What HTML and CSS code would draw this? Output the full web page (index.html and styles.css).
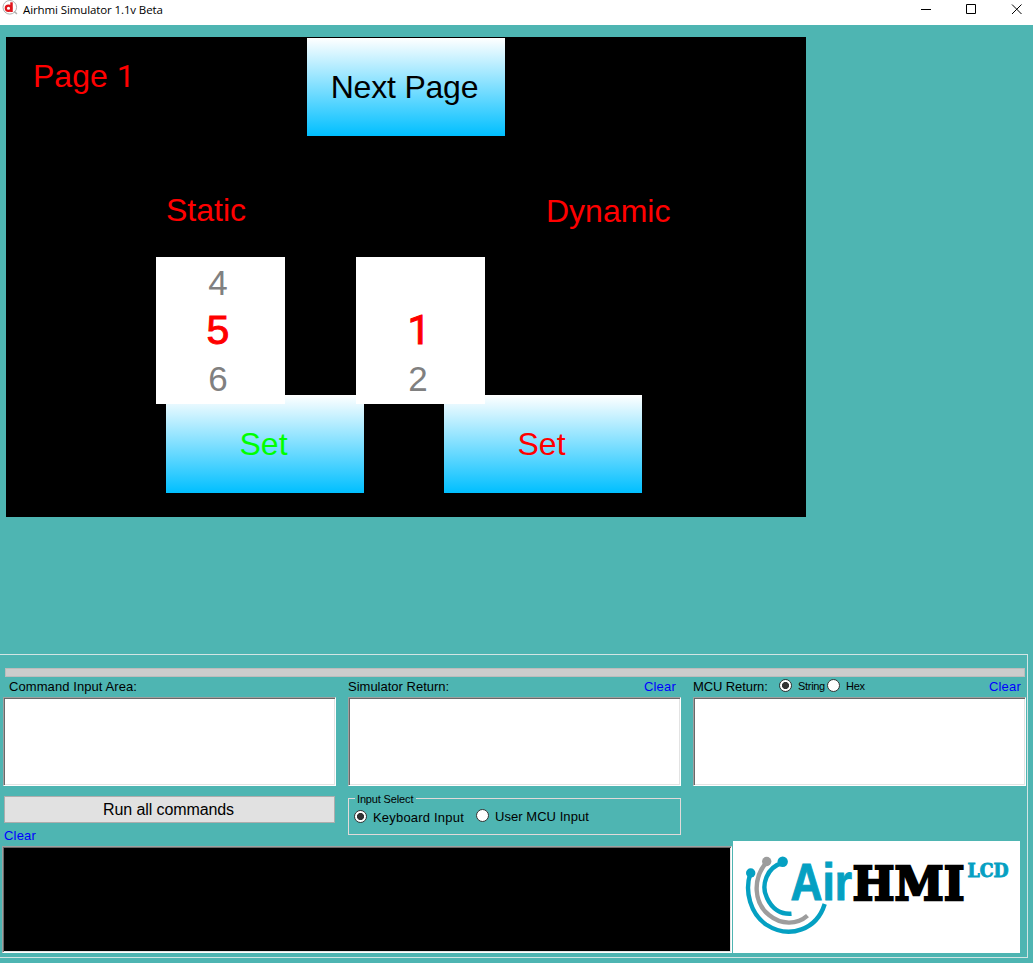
FILE: index.html
```html
<!DOCTYPE html>
<html lang="en">
<head>
<meta charset="utf-8">
<title>Airhmi Simulator 1.1v Beta</title>
<link rel="stylesheet" href="styles.css">
</head>
<body>
<header class="titlebar">
  <svg class="app-icon" width="16" height="16" viewBox="0 0 16 16">
    <circle cx="7.800" cy="7.300" r="6.800" fill="#fff" stroke="#b0b0b0"/>
    <path d="M12 11.500l3 2.300" stroke="#b0b0b0" stroke-width="1.500"/>
    <ellipse cx="6.500" cy="8.300" rx="2.700" ry="2.600" fill="none" stroke="#e0151b" stroke-width="2.200"/>
    <path d="M9.500 2.300v9.700" stroke="#e0151b" stroke-width="2.500"/>
  </svg>
  <span class="title">Airhmi Simulator 1.1v Beta</span>
  <svg class="controls" width="112" height="24" viewBox="0 0 112 24" fill="none" stroke="#000">
    <path d="M0 9.500h10M45.500 4.500h9v9h-9z"/>
    <path d="M91 4.500l9.500 9.500M100.500 4.500l-9.500 9.500"/>
  </svg>
</header>
<main class="stage">
  <div class="screen">
    <span class="label page-label">Page <span class="digit">1</span></span>
    <div class="button next">Next Page</div>
    <span class="label static-label">Static</span>
    <span class="label dynamic-label">Dynamic</span>
    <div class="button set-static">Set</div>
    <div class="button set-dynamic">Set</div>
    <div class="picker picker-static"><span>4</span><b>5</b><span class="after">6</span></div>
    <div class="picker picker-dynamic"><span></span><b class="digit">1</b><span class="after">2</span></div>
  </div>
</main>
<section class="console">
  <div class="progress"></div>
  <div class="columns">
    <div class="column">
      <div class="heading first"><span>Command Input Area:</span></div>
      <div class="textbox"></div>
    </div>
    <div class="column">
      <div class="heading"><span>Simulator Return:</span><span class="link">Clear</span></div>
      <div class="textbox"></div>
    </div>
    <div class="column">
      <div class="heading"><span class="mcu">MCU Return:</span>
        <i class="radio on string-radio"></i><span class="small string">String</span>
        <i class="radio hex-radio"></i><span class="small hex">Hex</span>
        <span class="link">Clear</span></div>
      <div class="textbox"></div>
    </div>
  </div>
  <div class="actions">
    <div class="run-col">
      <div class="run">Run all commands</div>
      <span class="link log-clear">Clear</span>
    </div>
    <div class="input-select">
      <span class="legend">Input Select</span>
      <div class="option"><i class="radio on"></i><span>Keyboard Input</span></div>
      <div class="option user"><i class="radio"></i><span>User MCU Input</span></div>
    </div>
  </div>
  <div class="bottom">
    <div class="log"></div>
    <svg class="logo" width="287" height="112" viewBox="0 0 287 112">
      <rect width="287" height="112" fill="#fff"/>
      <g fill="none" stroke="#05a0c2" stroke-width="4.400">
        <path d="M17.500 32C11 51 18 73 33 83.500C57 99 84 88 91.700 63"/>
        <path d="M49.500 22C34 26 27.500 44 34 57C39 68 48 73.500 58.500 72.700"/>
        <path d="M33.700 21C19 38 21 62 36 74C48 84 64 84 74.500 74.700" stroke="#9d9d9d"/>
      </g>
      <circle cx="17.700" cy="32" r="4.700" fill="#05a0c2"/>
      <circle cx="33.700" cy="20.500" r="4.700" fill="#9d9d9d"/>
      <circle cx="49.700" cy="20.700" r="5.200" fill="#05a0c2"/>
      <text class="logo-air" x="57.500" y="59" textLength="61.500" lengthAdjust="spacingAndGlyphs">Air</text>
      <text class="logo-hmi" x="119.500" y="58.500" textLength="112" lengthAdjust="spacingAndGlyphs">HMI</text>
      <text class="logo-lcd" x="234.500" y="36.300" textLength="41" lengthAdjust="spacingAndGlyphs">LCD</text>
    </svg>
  </div>
</section>
</body>
</html>
```
FILE: styles.css
```css
* { box-sizing: border-box; }
body {
  margin: 0;
  width: 1033px;
  height: 963px;
  overflow: hidden;
  background: #4eb5b2;
  color: #000;
  font: 13px/16px "Liberation Sans", Arial, sans-serif;
}
.titlebar {
  display: flex;
  height: 25px;
  padding-left: 2px;
  background: #fff;
}
.title {
  margin: 2px 0 0 5px;
  font: 11.5px/16px "Open Sans", "Noto Sans", sans-serif;
  letter-spacing: -0.11px;
  white-space: nowrap;
}
.controls { margin-left: auto; }
.stage { height: 629px; padding: 12px 0 0 6px; }

/* Simulated display: widgets sit at free positions */
.screen {
  position: relative;
  width: 800px;
  height: 480px;
  background: #000;
  font-size: 32px;
  line-height: 36px;
}
.label { position: absolute; color: #f00; white-space: nowrap; }
.digit { font-family: Roboto, sans-serif; }
.page-label { left: 27px; top: 21px; }
.static-label { left: 160px; top: 155px; }
.dynamic-label { left: 540px; top: 156px; }
.button {
  position: absolute;
  width: 198px;
  height: 98px;
  background: linear-gradient(#fff, #00bfff);
  text-align: center;
  line-height: 98px;
}
.next { left: 301px; top: 1px; padding-right: 3px; letter-spacing: -0.2px; }
.set-static { left: 160px; top: 358px; padding-right: 3px; color: #0f0; }
.set-dynamic { left: 438px; top: 358px; padding-right: 3px; color: #f00; }
.picker {
  position: absolute;
  top: 220px;
  display: grid;
  grid-template-rows: 49px 49px 49px;
  width: 129px;
  height: 147px;
  padding-right: 5px;
  background: #fff;
  color: #808080;
  font-size: 35px;
  line-height: 51px;
  text-align: center;
}
.picker .after { line-height: 47px; }
.picker b {
  color: #f00;
  font-size: 41px;
  font-weight: 400;
  line-height: 49px;
  -webkit-text-stroke: 1px #f00;
}
.picker .digit { padding-left: 2px; }
.picker-static { left: 150px; }
.picker-dynamic { left: 350px; }

.console {
  width: 1028px;
  height: 304px;
  padding-top: 13px;
  border: 1px solid #d2e5e4;
  border-left: 0;
}
.progress {
  height: 9px;
  margin: 0 2px 0 5px;
  background: #ccc;
  border: 1px solid #bcbcbc;
}
.columns { display: flex; gap: 12px; padding-left: 3px; }
.column { width: 333px; }
.heading {
  display: flex;
  align-items: center;
  height: 20px;
  white-space: nowrap;
}
.heading.first { padding-left: 6px; letter-spacing: 0.08px; }
.link { color: #00f; letter-spacing: 0.2px; }
.heading .link { margin-left: auto; margin-right: 5px; }
.mcu { width: 76px; letter-spacing: -0.1px; }
.small { margin-top: -3px; font-size: 11px; letter-spacing: -0.3px; }
.textbox, .log {
  border: 1px solid;
  border-color: #a0a0a0 #fff #fff #a0a0a0;
  box-shadow: inset 1px 1px #696969, inset -1px -1px #e3e3e3;
}
.textbox { height: 89px; background: #fff; }
.radio {
  flex: none;
  width: 13px;
  height: 13px;
  border: 1px solid #333;
  border-radius: 50%;
  background: #fff;
}
.radio.on { background: radial-gradient(circle, #333 3.2px, #fff 3.9px); }
.heading .radio { margin-top: -3px; }
.string-radio { margin-left: 10px; }
.string { width: 30px; margin-left: 6px; }
.hex-radio { margin-left: -1px; }
.hex { margin-left: 6px; }

.actions { display: flex; height: 60px; padding: 10px 0 0 4px; }
.run-col { width: 344px; }
.run {
  width: 331px;
  height: 27px;
  padding-right: 2px;
  background: #e1e1e1;
  border: 1px solid #adadad;
  font-size: 16px;
  letter-spacing: -0.1px;
  line-height: 25px;
  text-align: center;
}
.log-clear { display: block; margin-top: 5px; }
.input-select {
  position: relative;
  display: flex;
  width: 333px;
  height: 37px;
  margin-top: 2px;
  padding: 10px 0 0 5px;
  border: 1px solid #e2dada;
}
.legend {
  position: absolute;
  left: 6px;
  top: -8px;
  width: 61px;
  padding-left: 2px;
  background: #4eb5b2;
  font-size: 11px;
  line-height: 16px;
  letter-spacing: -0.15px;
  white-space: nowrap;
}
.option { display: flex; align-items: center; height: 16px; gap: 6px; letter-spacing: 0.2px; white-space: nowrap; }
.option span { margin-top: 1px; }
.option .radio { margin-top: -1px; }
.option.user { margin: -1px 0 0 12px; letter-spacing: 0.05px; }

.bottom { display: flex; padding-left: 2px; }
.log { width: 730px; height: 107px; background: #000; }
.logo { margin: -5px 0 0 1px; }
.logo-air { font: 700 52px "Liberation Sans", sans-serif; fill: #05a0c2; stroke: #05a0c2; stroke-width: 1px; }
.logo-hmi { font: 700 47.5px "DejaVu Serif", serif; fill: #000; stroke: #000; stroke-width: 2.4px; }
.logo-lcd { font: 700 18px "DejaVu Serif", serif; fill: #05a0c2; stroke: #05a0c2; stroke-width: 0.9px; }
```
